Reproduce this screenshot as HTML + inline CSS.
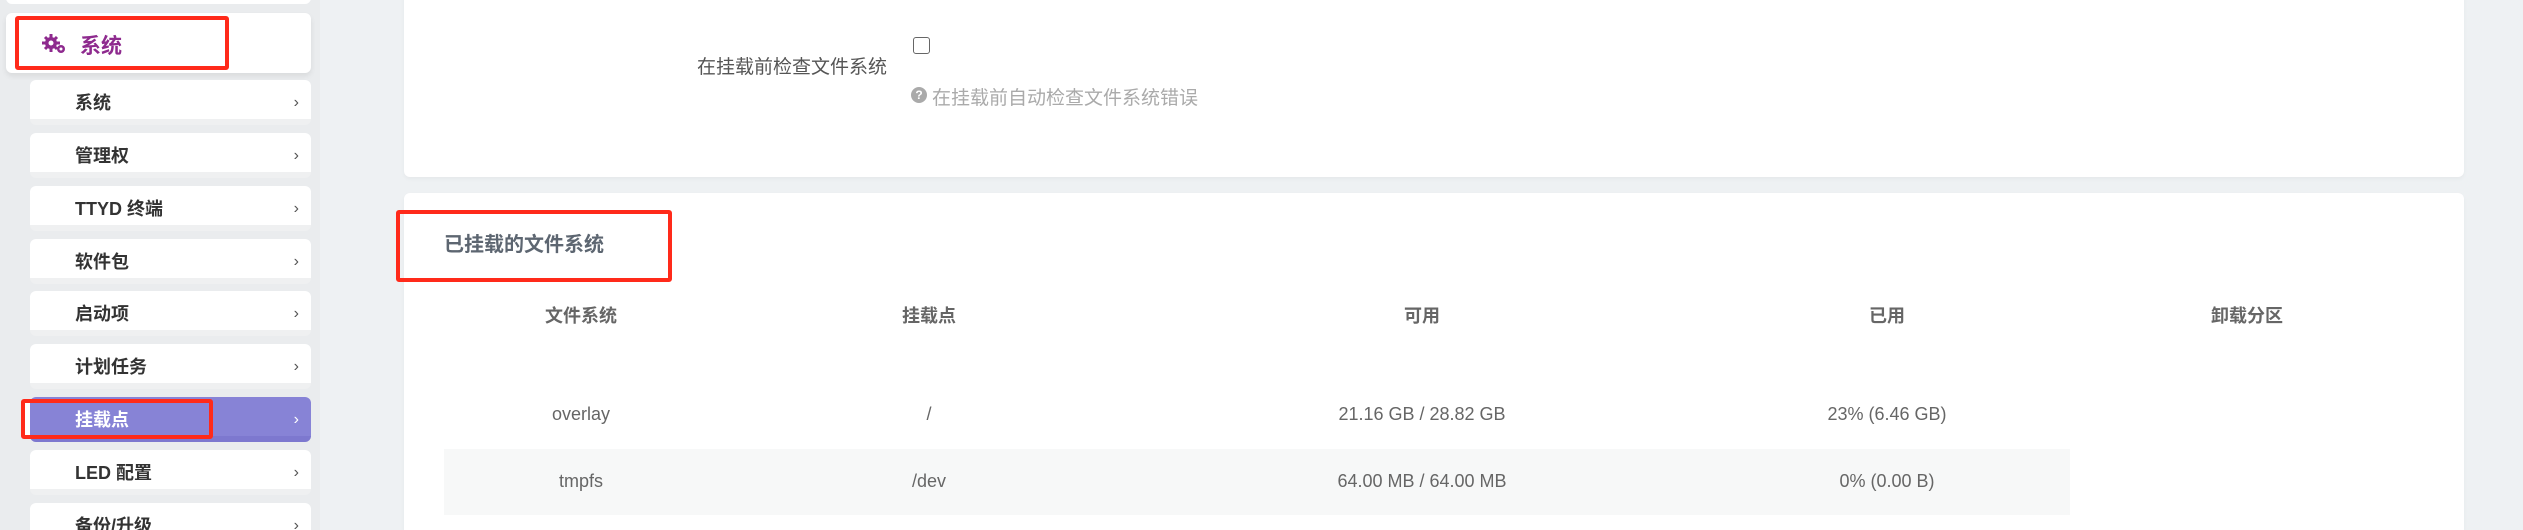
<!DOCTYPE html>
<html style="width:2523px;height:530px;overflow:hidden"><head><meta charset="utf-8"><style>
*{margin:0;padding:0;box-sizing:border-box}
body{width:2523px;height:530px;overflow:hidden;background:#eef1f3;font-family:"Liberation Sans","Noto Sans CJK SC",sans-serif;position:relative}
.side{position:absolute;left:0;top:0;width:320px;height:530px;background:#eaecee}
.abs{position:absolute}
.item{position:absolute;left:30px;width:281px;height:45px;background:#fff;border-radius:6px;border-bottom:6px solid #eff0f1;font-size:18px;font-weight:bold;color:#333;line-height:39px;padding-left:45px;padding-top:4px}
.item .ch{position:absolute;right:12px;top:3px;font-weight:normal;color:#555;font-size:16px}
.item.act{background:#8783d6;color:#fff;border-bottom:6px solid #7d78cf}
.item.act .ch{color:#fff}
.card{position:absolute;left:404px;width:2060px;background:#fff;border-radius:6px;box-shadow:0 2px 4px rgba(0,0,0,.04)}
.red{position:absolute;border:4px solid #ff2a1a;border-radius:3px}
.th{position:absolute;top:302px;font-size:18px;font-weight:bold;color:#666;text-align:center}
.td{position:absolute;font-size:18px;color:#666;text-align:center}
</style></head><body>
<div class="side"></div>
<div class="abs" style="left:6px;top:-10px;width:305px;height:14px;background:#fff;border-radius:6px"></div>
<div class="abs" style="left:6px;top:13px;width:305px;height:60px;background:#fff;border-radius:6px;box-shadow:0 3px 6px rgba(0,0,0,.08)"></div>
<svg class="abs" style="left:42px;top:33px" width="26" height="22" viewBox="0 0 26 22"><g fill="#8e2a8e"><circle cx="9" cy="10" r="6"/><g stroke="#8e2a8e" stroke-width="3"><line x1="9" y1="1" x2="9" y2="19"/><line x1="0" y1="10" x2="18" y2="10"/><line x1="3" y1="4" x2="15" y2="16"/><line x1="15" y1="4" x2="3" y2="16"/></g><circle cx="9" cy="10" r="2.5" fill="#fff"/><circle cx="19" cy="16" r="4"/><circle cx="19" cy="16" r="1.5" fill="#fff"/></g></svg>
<div class="abs" style="left:80px;top:30px;font-size:21px;font-weight:bold;color:#8e2a8e">系统</div>
<div class="red" style="left:15px;top:16px;width:214px;height:54px"></div>

<div class="item" style="top:80px">系统<span class="ch">›</span></div>
<div class="item" style="top:133px">管理权<span class="ch">›</span></div>
<div class="item" style="top:186px">TTYD 终端<span class="ch">›</span></div>
<div class="item" style="top:239px">软件包<span class="ch">›</span></div>
<div class="item" style="top:291px">启动项<span class="ch">›</span></div>
<div class="item" style="top:344px">计划任务<span class="ch">›</span></div>
<div class="item act" style="top:397px">挂载点<span class="ch">›</span></div>
<div class="abs" style="left:25px;top:400px;width:5px;height:37px;background:#fff"></div>
<div class="red" style="left:21px;top:399px;width:192px;height:40px"></div>
<div class="item" style="top:450px">LED 配置<span class="ch">›</span></div>
<div class="item" style="top:503px">备份/升级<span class="ch">›</span></div>

<div class="card" style="top:-10px;height:187px"></div>
<div class="abs" style="left:697px;top:52px;font-size:19px;color:#555">在挂载前检查文件系统</div>
<div class="abs" style="left:913px;top:37px;width:17px;height:17px;border:1.5px solid #666;border-radius:3px;background:#fff"></div>
<div class="abs" style="left:911px;top:87px;width:16px;height:16px;border-radius:50%;background:#aaa;color:#fff;font-size:12px;font-weight:bold;text-align:center;line-height:16px">?</div>
<div class="abs" style="left:932px;top:83px;font-size:19px;color:#aaa">在挂载前自动检查文件系统错误</div>

<div class="card" style="top:193px;height:337px;border-radius:6px 6px 0 0"></div>
<div class="abs" style="left:444px;top:228px;font-size:20px;font-weight:bold;color:#5d6671">已挂载的文件系统</div>
<div class="red" style="left:396px;top:210px;width:276px;height:72px"></div>

<div class="th" style="left:444px;width:274px">文件系统</div>
<div class="th" style="left:718px;width:422px">挂载点</div>
<div class="th" style="left:1140px;width:564px">可用</div>
<div class="th" style="left:1704px;width:366px">已用</div>
<div class="th" style="left:2070px;width:354px">卸载分区</div>

<div class="abs" style="left:444px;top:449px;width:1626px;height:66px;background:#f7f8f8"></div>
<div class="td" style="top:404px;left:444px;width:274px">overlay</div>
<div class="td" style="top:404px;left:718px;width:422px">/</div>
<div class="td" style="top:404px;left:1140px;width:564px">21.16 GB / 28.82 GB</div>
<div class="td" style="top:404px;left:1704px;width:366px">23% (6.46 GB)</div>
<div class="td" style="top:471px;left:444px;width:274px">tmpfs</div>
<div class="td" style="top:471px;left:718px;width:422px">/dev</div>
<div class="td" style="top:471px;left:1140px;width:564px">64.00 MB / 64.00 MB</div>
<div class="td" style="top:471px;left:1704px;width:366px">0% (0.00 B)</div>
</body></html>
